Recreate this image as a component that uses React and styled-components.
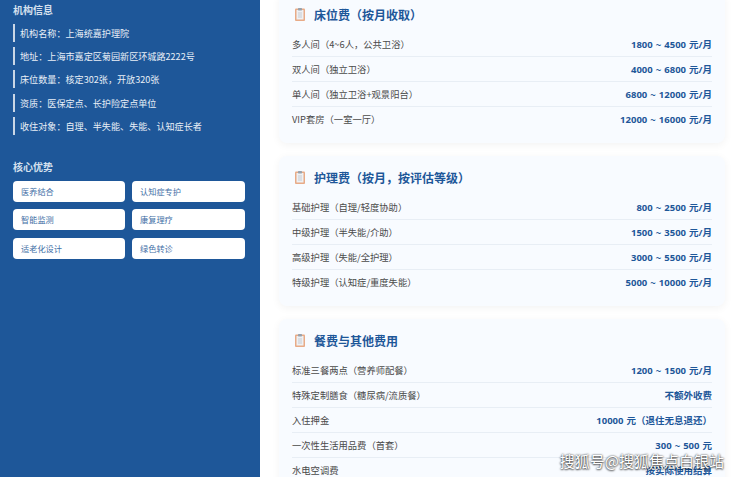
import styled, { createGlobalStyle } from 'styled-components'

const FONT = `"Noto Sans CJK SC", "Noto Sans", sans-serif`

const Global = createGlobalStyle`
  html, body {
    margin: 0;
    padding: 0;
    height: 100%;
    overflow: hidden;
    background: #fff;
  }
  #root {
    height: 100%;
  }
`

const Page = styled.div`
  position: relative;
  display: flex;
  height: 477px;
  overflow: hidden;
  font-family: ${FONT};
`

const Sidebar = styled.aside`
  width: 260px;
  flex: none;
  background: #1e5799;
  padding: 3px 15px 0 13px;
  box-sizing: border-box;
  color: #fff;
`

const SideTitle = styled.h3`
  margin: 0 0 ${({ $gap }) => $gap}px;
  font-size: 10px;
  line-height: 14px;
  font-weight: 700;
  color: #d5e0ee;
`

const InfoList = styled.div`
  display: flex;
  flex-direction: column;
  gap: 5.2px;
  margin-bottom: 25px;
`

const InfoItem = styled.div`
  height: 18px;
  line-height: 18px;
  padding-left: 5px;
  border-left: 2px solid #c9d6e6;
  font-size: 9.1px;
  color: #e9eff7;
  white-space: nowrap;
`

const TagGrid = styled.div`
  display: grid;
  grid-template-columns: 112px 113px;
  grid-auto-rows: 21px;
  gap: 7.6px 7px;
`

const Tag = styled.div`
  background: #fff;
  border-radius: 4px;
  padding-left: 8px;
  line-height: 21px;
  font-size: 8.2px;
  color: #3f6fa6;
`

const Main = styled.main`
  flex: 1;
  min-width: 0;
  display: flex;
  flex-direction: column;
  gap: 13px;
  padding: 0 15px 0 19px;
  margin-top: -7px;
`

const Card = styled.section`
  flex: none;
  background: #f8fbff;
  border-radius: 8px;
  box-shadow: 0 2px 8px rgba(0, 0, 0, 0.05);
  padding: 12px 13px 11px;
`

const CardTitle = styled.h2`
  display: flex;
  align-items: center;
  gap: 9px;
  height: 18px;
  margin: 0 0 9px 3px;
  font-size: 12px;
  font-weight: 700;
  color: #1e5799;
`

const Row = styled.div`
  display: flex;
  justify-content: space-between;
  align-items: center;
  height: 25px;
  box-sizing: border-box;
  font-size: 9.3px;
  border-bottom: 1px solid ${({ $last }) => ($last ? 'transparent' : '#e8eef5')};
`

const Label = styled.span`
  color: #4a4a4a;
`

const Value = styled.span`
  color: #1e5799;
  font-family: "Open Sans", ${FONT};
  font-size: 9.5px;
  font-weight: 700;
  word-spacing: 0.6px;
`

const Watermark = styled.div`
  position: absolute;
  right: 16px;
  bottom: 6px;
  font-size: 15px;
  line-height: 20px;
  color: #fff;
  text-shadow: 0 0 2px rgba(0, 0, 0, 0.85), 0 1px 2px rgba(0, 0, 0, 0.6);
  white-space: nowrap;
`

const ClipboardIcon = () => (
  <svg width="10" height="13" viewBox="0 0 10 13" style={{ flex: 'none' }}>
    <rect x="0" y="0.5" width="10" height="12.5" rx="1" fill="#e8ab87" />
    <rect x="1.5" y="2" width="7" height="9.5" fill="#eef0f3" />
    <rect x="3" y="0" width="4" height="2.4" rx="0.6" fill="#98a2ad" />
    <path d="M3 5h4M3 7h4M3 9h4" stroke="#b4bcc5" strokeWidth="0.7" />
  </svg>
)

const info = [
  '机构名称：上海统嘉护理院',
  '地址：上海市嘉定区菊园新区环城路2222号',
  '床位数量：核定302张，开放320张',
  '资质：医保定点、长护险定点单位',
  '收住对象：自理、半失能、失能、认知症长者',
]

const tags = ['医养结合', '认知症专护', '智能监测', '康复理疗', '适老化设计', '绿色转诊']

const cards = [
  {
    title: '床位费（按月收取）',
    rows: [
      ['多人间（4~6人，公共卫浴）', '1800 ~ 4500 元/月'],
      ['双人间（独立卫浴）', '4000 ~ 6800 元/月'],
      ['单人间（独立卫浴+观景阳台）', '6800 ~ 12000 元/月'],
      ['VIP套房（一室一厅）', '12000 ~ 16000 元/月'],
    ],
  },
  {
    title: '护理费（按月，按评估等级）',
    rows: [
      ['基础护理（自理/轻度协助）', '800 ~ 2500 元/月'],
      ['中级护理（半失能/介助）', '1500 ~ 3500 元/月'],
      ['高级护理（失能/全护理）', '3000 ~ 5500 元/月'],
      ['特级护理（认知症/重度失能）', '5000 ~ 10000 元/月'],
    ],
  },
  {
    title: '餐费与其他费用',
    rows: [
      ['标准三餐两点（营养师配餐）', '1200 ~ 1500 元/月'],
      ['特殊定制膳食（糖尿病/流质餐）', '不额外收费'],
      ['入住押金', '10000 元（退住无息退还）'],
      ['一次性生活用品费（首套）', '300 ~ 500 元'],
      ['水电空调费', '按实际使用结算'],
    ],
  },
]

export default function App() {
  return (
    <Page>
      <Global />
      <Sidebar>
        <SideTitle $gap={7}>机构信息</SideTitle>
        <InfoList>
          {info.map((text) => (
            <InfoItem key={text}>{text}</InfoItem>
          ))}
        </InfoList>
        <SideTitle $gap={7}>核心优势</SideTitle>
        <TagGrid>
          {tags.map((tag) => (
            <Tag key={tag}>{tag}</Tag>
          ))}
        </TagGrid>
      </Sidebar>
      <Main>
        {cards.map((card) => (
          <Card key={card.title}>
            <CardTitle>
              <ClipboardIcon />
              {card.title}
            </CardTitle>
            {card.rows.map(([label, value], i) => (
              <Row key={label} $last={i === card.rows.length - 1}>
                <Label>{label}</Label>
                <Value>{value}</Value>
              </Row>
            ))}
          </Card>
        ))}
      </Main>
      <Watermark>搜狐号@搜狐焦点白银站</Watermark>
    </Page>
  )
}
